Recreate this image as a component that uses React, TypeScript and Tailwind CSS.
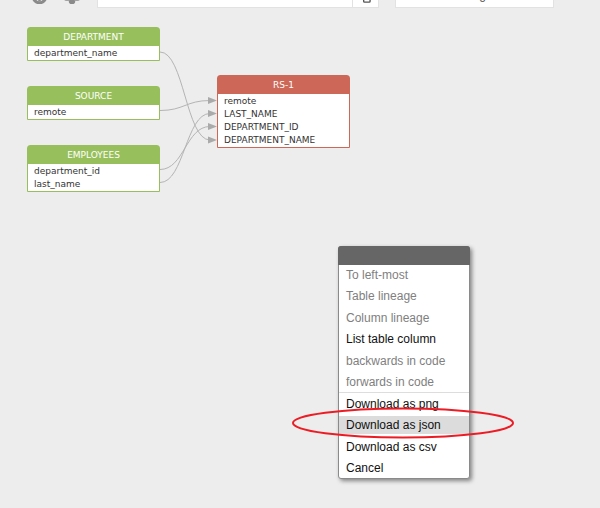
import { Bell, CircleHelp, Copy } from "lucide-react";
import clsx from "clsx";

interface TableNode {
  name: string;
  columns: string[];
  position: string;
  result?: boolean;
}

const nodes: TableNode[] = [
  { name: "DEPARTMENT", columns: ["department_name"], position: "left-[27px] top-[27px]" },
  { name: "SOURCE", columns: ["remote"], position: "left-[27px] top-[86px]" },
  { name: "EMPLOYEES", columns: ["department_id", "last_name"], position: "left-[27px] top-[145px]" },
  {
    name: "RS-1",
    columns: ["remote", "LAST_NAME", "DEPARTMENT_ID", "DEPARTMENT_NAME"],
    position: "left-[217px] top-[75px]",
    result: true,
  },
];

// y of the source column, y of the target column
const edges = [
  { from: 52, to: 140 },
  { from: 110.5, to: 100.5 },
  { from: 169.5, to: 126.5 },
  { from: 182.5, to: 113.5 },
];

const lineageItems = [
  { label: "To left-most", disabled: true },
  { label: "Table lineage", disabled: true },
  { label: "Column lineage", disabled: true },
  { label: "List table column", disabled: false },
  { label: "backwards in code", disabled: true },
  { label: "forwards in code", disabled: true },
];

const downloadItems = [
  { label: "Download as png" },
  { label: "Download as json", active: true },
  { label: "Download as csv" },
  { label: "Cancel" },
];

function Toolbar() {
  return (
    <header className="flex h-2 items-end overflow-hidden pr-[46px] pl-8">
      <button aria-label="Help" className="mb-1 text-[#8a8a8a]">
        <CircleHelp size={15} strokeWidth={5} />
      </button>
      <button aria-label="Notifications" className="mb-1 ml-4 text-[#8a8a8a]">
        <Bell size={18} fill="currentColor" strokeWidth={5} />
      </button>
      <input
        aria-label="Search"
        className="ml-4 h-7 min-w-0 flex-1 border border-[#e2e2e2] bg-white outline-none"
      />
      <button
        aria-label="Copy"
        className="flex h-7 w-[26px] items-end justify-center border border-l-0 border-[#e2e2e2] bg-white pb-1 text-[#555]"
      >
        <Copy size={11} strokeWidth={3} />
      </button>
      <button className="ml-4 flex h-7 w-[159px] items-end justify-center border border-[#e2e2e2] bg-white pb-1 pl-4 font-['Liberation_Sans',Arial,sans-serif] text-[12px] leading-4 text-[#555]">
        g
      </button>
    </header>
  );
}

function NodeCard({ node }: { node: TableNode }) {
  return (
    <section
      className={clsx(
        "absolute w-[133px] rounded-t-[3px] border bg-white font-['Verdana','DejaVu_Sans',sans-serif] text-[9px]",
        node.result ? "border-[#cd6858]" : "border-[#97bf5c]",
        node.position
      )}
    >
      <h2
        className={clsx(
          "text-center leading-[18px] text-white",
          node.result ? "bg-[#cd6858]" : "bg-[#97bf5c]"
        )}
      >
        {node.name}
      </h2>
      <ul className="px-1.5 pt-px text-[#333]">
        {node.columns.map((column) => (
          <li key={column} className="leading-[13px]">
            {column}
          </li>
        ))}
      </ul>
    </section>
  );
}

function Edges() {
  return (
    <svg className="pointer-events-none absolute top-0 left-0" width="360" height="200" fill="none">
      {edges.map(({ from, to }) => (
        <g key={from}>
          <path d={`M160 ${from} C184 ${from} 186 ${to} 210 ${to}`} stroke="#b4b4b4" />
          <path d={`M208 ${to - 3.5} L217 ${to} L208 ${to + 3.5} Z`} fill="#aaa" />
        </g>
      ))}
    </svg>
  );
}

function ContextMenu() {
  return (
    <div
      role="menu"
      className="absolute top-[246px] left-[338px] w-[132px] rounded-[3px] border border-[#8a8a8a] bg-white font-['Liberation_Sans',Arial,sans-serif] text-[12px] leading-[18px] shadow-[2px_2px_4px_rgba(0,0,0,0.45)]"
    >
      <div className="-mx-px -mt-px h-[19px] rounded-t-[3px] bg-[#666]" />
      <div className="flex h-[127px] flex-col justify-between pt-px pb-px">
        {lineageItems.map((item) => (
          <button
            key={item.label}
            role="menuitem"
            disabled={item.disabled}
            className={clsx("px-[7px] text-left", item.disabled ? "text-[#808080]" : "text-[#111]")}
          >
            {item.label}
          </button>
        ))}
      </div>
      <div className="flex h-[86px] flex-col justify-between border-t border-[#ddd] pt-0.5 pb-px">
        {downloadItems.map((item) => (
          <button
            key={item.label}
            role="menuitem"
            className={clsx("px-[7px] text-left text-[#111]", item.active && "bg-[#dcdcdc]")}
          >
            {item.label}
          </button>
        ))}
      </div>
    </div>
  );
}

export default function App() {
  return (
    <div className="relative min-h-screen overflow-hidden bg-[#ededed]">
      <Toolbar />
      <main>
        {nodes.map((node) => (
          <NodeCard key={node.name} node={node} />
        ))}
        <Edges />
        <ContextMenu />
        {/* Highlight around the json download */}
        <svg className="pointer-events-none absolute top-[406px] left-[290px]" width="226" height="34" fill="none">
          <ellipse cx="113" cy="17" rx="110" ry="14.5" stroke="#ed1c24" strokeWidth="2" />
        </svg>
      </main>
    </div>
  );
}
